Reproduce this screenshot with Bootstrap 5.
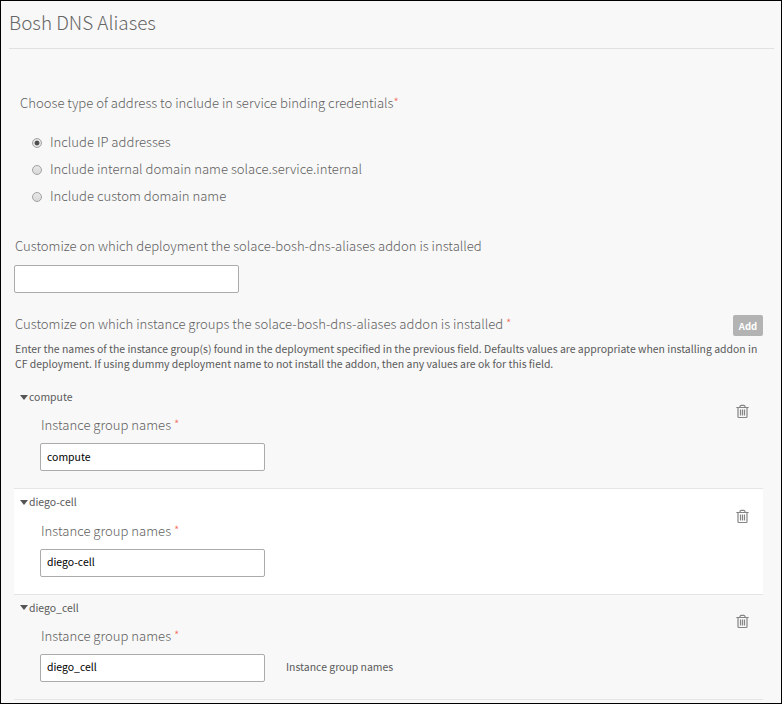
<!DOCTYPE html>
<html lang="en">
<head>
<meta charset="utf-8">
<meta name="viewport" content="width=device-width, initial-scale=1">
<title>Bosh DNS Aliases</title>
<link href="https://cdn.jsdelivr.net/npm/bootstrap@5.3.0/dist/css/bootstrap.min.css" rel="stylesheet">
<style>
body{font-family:"Noto Sans CJK SC","Noto Sans",sans-serif;font-size:10.46px;line-height:15px;color:#5a5a5a;background:#f8f8f8}
.frame{height:704px;border:1px solid #000;padding:0 7px 0 8px;background:#f8f8f8}
.page-title{font-size:18.9px;line-height:28px;font-weight:300;color:#666;padding:7px 0 12px;border-bottom:1px solid #dfe2e1;margin:0}
.lbl{font-size:13.1px;line-height:20px;font-weight:300;color:#5f5f5f;white-space:nowrap;margin:0}
.req{color:#f4695a;font-size:12px;line-height:0;position:relative;top:-1px}
.choices{padding:44px 0 0 11px}
.choices .options{padding:15px 0 0 12px}
.choice{height:27px}
.choice .form-check-input{width:10px;height:10px;margin:3px 8px 0 0;border:1px solid #a2a2a2;background:linear-gradient(#e8e8e8,#d8d8d8);flex:none}
.choice .form-check-input:checked{background:radial-gradient(circle,#4f4f4f 0 2px,#e4e4e4 2.8px)}
.section-body{padding:27px 0 0 5px}
.section-body .lbl,.help{padding-left:1px}
.txt{width:225px;height:28px;min-height:0;padding:0 6px 2px;font-size:10.46px;line-height:24px;color:#000;border:1px solid #ababab;border-radius:2px;background:#fff}
.dep{margin-bottom:9px}
.add-row{width:749px;padding-top:21px}
.add-btn{width:30px;height:21px;margin-top:1px;padding:2px 0 0;font-size:9.5px;line-height:19px;font-weight:700;color:#fff;background:#b3b3b3;border:0;border-radius:2px}
.help{margin:5px 0 13px;white-space:nowrap}
.group{width:749px;height:105.4px;padding:5px 0 0 6px;border-bottom:1px solid #e4e6e5}
.group:nth-child(even){background:#fff}
.caret{width:0;height:0;border:4px solid transparent;border-top:5px solid #555;border-bottom:0;margin:1px 1px 0 0}
.fields{padding:11.2px 0 0 20px}
.fields .lbl{margin-bottom:8px}
.hint{margin:-2px 0 0 21px}
.trash{margin:14.6px 14px 0 0}
</style>
</head>
<body>
<main class="frame overflow-hidden">
  <h1 class="page-title">Bosh DNS Aliases</h1>
  <form>
    <div class="choices">
      <p class="lbl">Choose type of address to include in service binding credentials<span class="req">*</span></p>
      <div class="options">
        <label class="choice d-flex align-items-center lbl"><input class="form-check-input" type="radio" name="addr" checked><span>Include IP addresses</span></label>
        <label class="choice d-flex align-items-center lbl"><input class="form-check-input" type="radio" name="addr"><span>Include internal domain name solace.service.internal</span></label>
        <label class="choice d-flex align-items-center lbl"><input class="form-check-input" type="radio" name="addr"><span>Include custom domain name</span></label>
      </div>
    </div>
    <div class="section-body">
      <div class="dep"><label class="lbl d-block" for="dep">Customize on which deployment the solace-bosh-dns-aliases addon is installed</label></div>
      <input id="dep" class="form-control txt" type="text">
      <div class="d-flex justify-content-between align-items-start add-row">
        <p class="lbl">Customize on which instance groups the solace-bosh-dns-aliases addon is installed <span class="req">*</span></p>
        <button type="button" class="btn add-btn">Add</button>
      </div>
      <p class="help">Enter the names of the instance group(s) found in the deployment specified in the previous field. Defaults values are appropriate when installing addon in<br>CF deployment. If using dummy deployment name to not install the addon, then any values are ok for this field.</p>
      <div class="groups">
        <div class="group d-flex justify-content-between">
          <div>
            <div class="d-flex align-items-center"><span class="caret"></span>compute</div>
            <div class="fields"><p class="lbl">Instance group names <span class="req">*</span></p><input class="form-control txt" type="text" value="compute"></div>
          </div>
          <svg class="trash" width="13" height="15" viewBox="0 0 13 15" fill="none" stroke="#858585" stroke-width="1.2"><path d="M.3 3.500h12.400M2 3.500v9.200q0 .8.8.8h7.400q.8 0 .8-.8V3.500M3.800 3.200q.4-1.900 1.400-1.900h2.600q1 0 1.400 1.900M4.500 5.500v6M6.500 5.500v6M8.500 5.500v6"/></svg>
        </div>
        <div class="group d-flex justify-content-between">
          <div>
            <div class="d-flex align-items-center"><span class="caret"></span>diego-cell</div>
            <div class="fields"><p class="lbl">Instance group names <span class="req">*</span></p><input class="form-control txt" type="text" value="diego-cell"></div>
          </div>
          <svg class="trash" width="13" height="15" viewBox="0 0 13 15" fill="none" stroke="#858585" stroke-width="1.2"><path d="M.3 3.500h12.400M2 3.500v9.200q0 .8.8.8h7.400q.8 0 .8-.8V3.500M3.800 3.200q.4-1.900 1.400-1.900h2.600q1 0 1.400 1.900M4.500 5.500v6M6.500 5.500v6M8.500 5.500v6"/></svg>
        </div>
        <div class="group d-flex justify-content-between">
          <div>
            <div class="d-flex align-items-center"><span class="caret"></span>diego_cell</div>
            <div class="fields"><p class="lbl">Instance group names <span class="req">*</span></p><div class="d-flex align-items-center"><input class="form-control txt" type="text" value="diego_cell"><span class="hint">Instance group names</span></div></div>
          </div>
          <svg class="trash" width="13" height="15" viewBox="0 0 13 15" fill="none" stroke="#858585" stroke-width="1.2"><path d="M.3 3.500h12.400M2 3.500v9.200q0 .8.8.8h7.400q.8 0 .8-.8V3.500M3.800 3.200q.4-1.900 1.400-1.900h2.600q1 0 1.400 1.900M4.500 5.500v6M6.500 5.500v6M8.500 5.500v6"/></svg>
        </div>
      </div>
    </div>
  </form>
</main>
<script src="https://cdn.jsdelivr.net/npm/bootstrap@5.3.0/dist/js/bootstrap.bundle.min.js"></script>
</body>
</html>
